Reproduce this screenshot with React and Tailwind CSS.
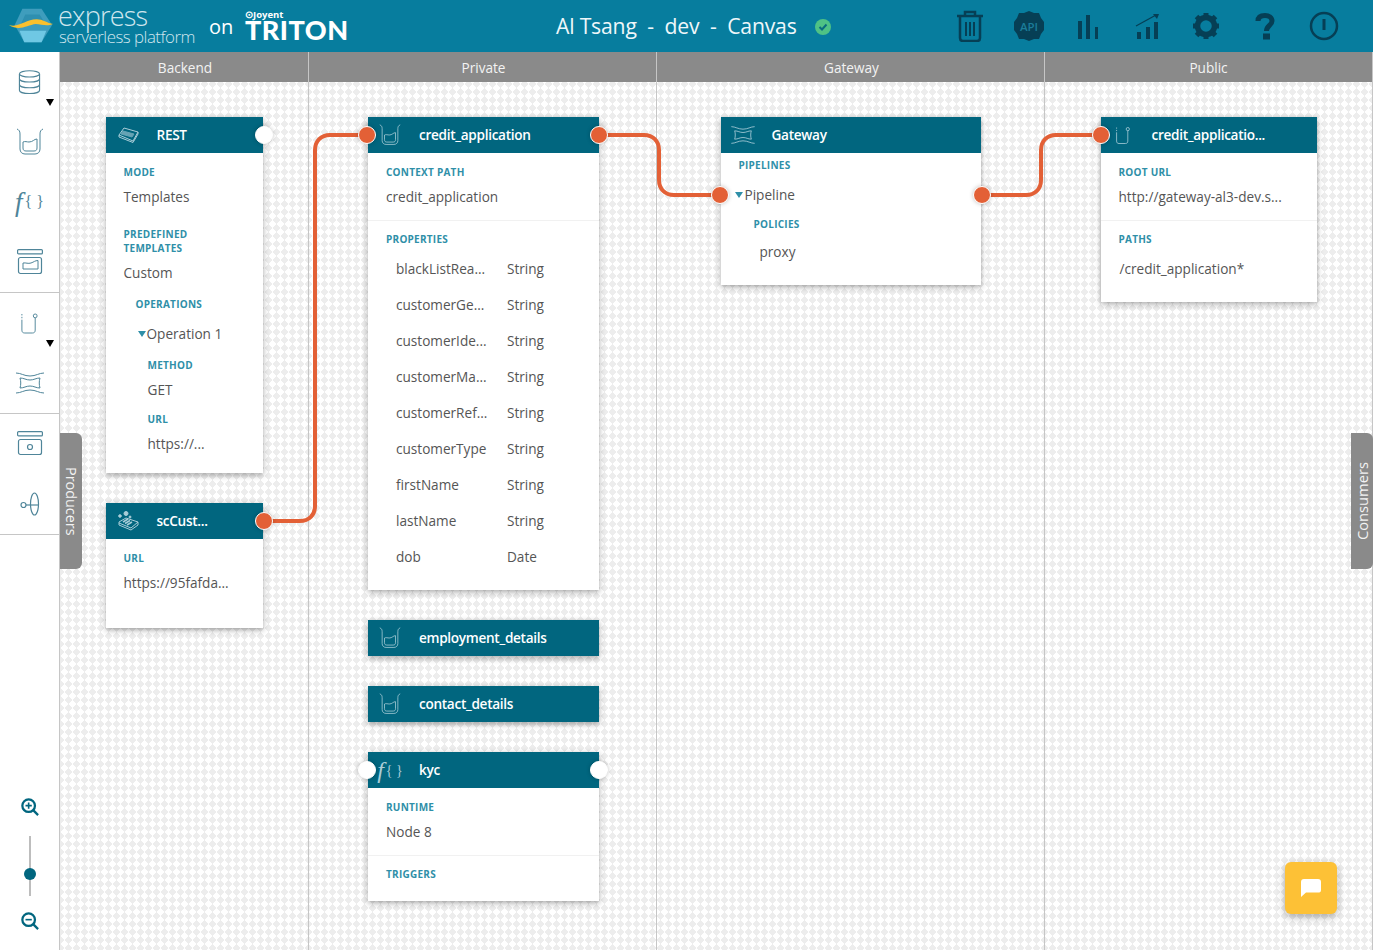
import React from "react";

const Beaker = ({ className }) => (
  <svg viewBox="0 0 28 28" className={className} fill="none" stroke="currentColor" strokeWidth="1">
    <path d="M1 1C3 2 4 3 4 6V21C4 24 6 26 9 26H19C22 26 24 24 24 21V6C24 3 25 2 27 1" />
    <path d="M7 14V20C7 22 8 23 10 23H18C20 23 21 22 21 20V11C18 11 17 14 13 14C11 14 9 13 7 14Z" />
  </svg>
);
const Gate = ({ className }) => (
  <svg viewBox="0 0 28 24" className={className} fill="none" stroke="currentColor" strokeWidth="1">
    <path d="M0 2C5 2 8 5 14 5C20 5 23 2 28 2" />
    <path d="M0 22C5 22 8 19 14 19C20 19 23 22 28 22" />
    <path d="M4 7C8 7 10 9 14 9C18 9 20 7 24 7" />
    <path d="M4 17C8 17 10 15 14 15C18 15 20 17 24 17" />
    <path d="M4 7C5 10 5 14 4 17M24 7C23 10 23 14 24 17" />
  </svg>
);
const Hook = ({ className }) => (
  <svg viewBox="0 0 20 22" className={className} fill="none" stroke="currentColor" strokeWidth="1">
    <path d="M2 1V6" strokeDasharray="1.5 1.5" />
    <path d="M2 7V18C2 20 3 21 5 21H13C15 21 16 20 16 18V5" />
    <circle cx="16" cy="3" r="2" />
  </svg>
);
const Rest = ({ className }) => (
  <svg viewBox="0 0 22 16" className={className} fill="none" stroke="currentColor" strokeWidth="1">
    <path d="M7 1L21 5L16 14L2 8Z" />
    <path d="M2 8L2 10L16 15.5L21 7V5" />
    <path d="M6 4L17 7L15 10L4 7Z" fill="currentColor" opacity=".6" />
  </svg>
);
const Swagger = ({ className }) => (
  <svg viewBox="0 0 22 20" className={className} fill="none" stroke="currentColor" strokeWidth="1">
    <path d="M2 11L9 7L21 11L14 17L2 12Z" />
    <path d="M2 12V14L14 19L21 14V11" />
    <path d="M6 11L11 8M8 12.500L13 9.500M10 14L15 11" strokeWidth="1.500" />
    <circle cx="9" cy="2.500" r="2" fill="currentColor" />
    <circle cx="3" cy="5" r="1.300" fill="currentColor" />
    <circle cx="13" cy="6" r="1" fill="currentColor" />
  </svg>
);
const Fn = ({ small }) => (
  <span className="font-['Liberation_Serif',serif] whitespace-pre flex items-center">
    <span className={`italic font-normal ${small ? "text-[24px]" : "text-[27px]"}`}>f</span>
    <span className={`ml-[2px] ${small ? "text-[14px]" : "text-[16px]"}`}>{"{ }"}</span>
  </span>
);
const Db = ({ className }) => (
  <svg viewBox="0 0 24 26" className={className} fill="none" stroke="currentColor" strokeWidth="1.200">
    <ellipse cx="12" cy="4" rx="10.500" ry="3.300" />
    <path d="M1.500 4V9C1.500 11 6 12.500 12 12.500C18 12.500 22.500 11 22.500 9V4" />
    <path d="M1.500 9V15C1.500 17 6 18.500 12 18.500C18 18.500 22.500 17 22.500 15V9" />
    <path d="M1.500 15V21C1.500 23 6 24.500 12 24.500C18 24.500 22.500 23 22.500 21V15" />
  </svg>
);
const BoxChart = ({ className }) => (
  <svg viewBox="0 0 26 26" className={className} fill="none" stroke="currentColor" strokeWidth="1.200">
    <rect x=".6" y=".6" width="24.800" height="4.300" rx="1" />
    <rect x="1.500" y="8.500" width="23" height="16" rx="2" />
    <path d="M6 20V14C9 13.500 11 15 14 14C17 13 18 11.500 21 11.500V20Z" strokeWidth="1" />
  </svg>
);
const BoxDot = ({ className }) => (
  <svg viewBox="0 0 26 26" className={className} fill="none" stroke="currentColor" strokeWidth="1.200">
    <rect x=".6" y=".6" width="24.800" height="4.300" rx="1" />
    <rect x="1.500" y="8.500" width="23" height="15" rx="2" />
    <circle cx="13" cy="16" r="2.500" />
  </svg>
);
const Side = ({ className }) => (
  <svg viewBox="0 0 20 24" className={className} fill="none" stroke="currentColor" strokeWidth="1.200">
    <circle cx="3.500" cy="13" r="2.500" />
    <path d="M6 13H19" />
    <ellipse cx="14.500" cy="12" rx="4" ry="11" />
  </svg>
);
const Tri = () => <span className="w-0 h-0 border-x-[4px] border-x-transparent border-t-[6px] border-t-[#2f8fa8] inline-block" />;

const Label = ({ children, className = "" }) => (
  <div className={`text-[10px] leading-[14px] font-bold uppercase tracking-[0.25px] text-[#2f8fa8] ${className}`}>{children}</div>
);
const Value = ({ children, className = "" }) => (
  <div className={`text-[13.600px] leading-[20px] text-[#555555] whitespace-nowrap ${className}`}>{children}</div>
);
const Port = ({ pos, on }) => (
  <span
    className={`absolute top-[9px] w-[18px] h-[18px] rounded-full shadow-[0_0_4px_rgba(0,0,0,0.25)] border border-white ${pos} ${
      on ? "bg-[#e36036]" : "bg-white"
    }`}
  />
);
const Port2 = ({ pos }) => (
  <span
    className={`absolute top-[69px] w-[18px] h-[18px] rounded-full bg-[#e36036] border border-white shadow-[0_0_4px_rgba(0,0,0,0.25)] ${pos}`}
  />
);

const Card = ({ w, icon, name, ports, children, className = "" }) => (
  <div className={`relative z-10 bg-white shadow-[0_2px_6px_rgba(0,0,0,0.35)] ${w} ${className}`}>
    <div className="relative flex items-center h-[36px] bg-[#01667f] text-white">
      <div className="w-[51px] h-full flex items-center justify-center text-[#a9cdd8] shrink-0 pr-[7px]">{icon}</div>
      <div className="text-[13.600px] leading-[20px] font-semibold tracking-[-0.3px] whitespace-nowrap">{name}</div>
      {ports}
    </div>
    {children}
  </div>
);

const props = [
  ["blackListRea...", "String"],
  ["customerGe...", "String"],
  ["customerIde...", "String"],
  ["customerMa...", "String"],
  ["customerRef...", "String"],
  ["customerType", "String"],
  ["firstName", "String"],
  ["lastName", "String"],
  ["dob", "Date"],
];

const Column = ({ title, className, bodyClass = "", headClass = "", children }) => (
  <div className={`h-full flex flex-col border-r border-[#c6c6c6] last:border-r-0 ${className}`}>
    <div className={`h-[30px] shrink-0 bg-[#8a8a8a] text-[#f3f3f3] text-[13.600px] leading-[32px] text-center ${headClass}`}>{title}</div>
    <div className={`flex flex-col items-center gap-[30px] pt-[35px] ${bodyClass}`}>{children}</div>
  </div>
);

const hdrIcon = "text-[#063f55]";
const SideCell = ({ children, tri }) => (
  <div className="relative h-[60px] flex items-center justify-center text-[#4f8599]">
    {children}
    {tri && <span className="absolute left-[46px] top-[47px] z-10 w-0 h-0 border-x-[4px] border-x-transparent border-t-[7px] border-t-black" />}
  </div>
);

export default function App() {
  return (
    <div className="relative w-full h-[950px] overflow-hidden flex flex-col font-['Open_Sans',sans-serif] bg-white">
      {/* Header */}
      <header className="relative h-[52px] shrink-0 bg-[#077d9e] flex items-center text-white">
        <svg viewBox="0 0 48 38" className="ml-[8px] w-[46px] h-[38px] shrink-0">
          <path d="M15 1H35L46 18L35 36H17L7 18Z" fill="#3f9dbd" />
          <path d="M12 24H40L35 36H17Z" fill="#6fc8e4" />
          <path d="M18 7H33L38 15C30 14 22 18 12 20Z" fill="#2e8fb0" />
          <path d="M1 18C12 21 18 12 30 12C36 12 41 16 47 17C40 20 35 17 29 17C20 18 12 25 1 18Z" fill="#fbc02d" />
        </svg>
        <div className="ml-[5px] w-[150px] shrink-0 font-light text-[#cfe6ee] mt-[-2px]">
          <div className="text-[27px] leading-[22px] tracking-[-0.8px] ml-[-1px]">express</div>
          <div className="text-[16.900px] leading-[18px] tracking-[-0.5px] mt-[1px] whitespace-nowrap">serverless platform</div>
        </div>
        <div className="text-[20px] w-[36px] shrink-0 mt-[1px]">on</div>
        <div className="w-[110px] shrink-0 mt-[-1px]">
          <div className="text-[9.500px] leading-[9px] font-bold">⊙Joyent</div>
          <div className="text-[27px] leading-[22px] font-black font-['Lato',sans-serif] tracking-[0.5px]">TRITON</div>
        </div>
        <div className="ml-[201px] text-[21.200px] whitespace-pre tracking-[-0.2px] text-[#eef7fa] w-[259px] shrink-0">{"Al Tsang  -  dev  -  Canvas"}</div>
        <svg viewBox="0 0 16 16" className="w-[16px] h-[16px] mt-[2px] shrink-0">
          <circle cx="8" cy="8" r="8" fill="#4fc285" />
          <path d="M4.500 8L7 10.500L11.500 5.500" fill="none" stroke="#0b6d7f" strokeWidth="2" />
        </svg>
        <div className="ml-[124px] flex items-center gap-[29px]">
          <svg viewBox="0 0 30 32" className={`w-[30px] h-[32px] ${hdrIcon}`} fill="none" stroke="currentColor" strokeWidth="2.500">
            <path d="M2 6H28M10 6V2H20V6M5 6V28C5 30 6 31 8 31H22C24 31 25 30 25 28V6" />
            <path d="M11 12V26M15 12V26M19 12V26" strokeWidth="2" />
          </svg>
          <svg viewBox="0 0 30 32" className={`w-[30px] h-[32px] ${hdrIcon}`}>
            <path d="M15 1L20 3L25 3L27 8L30 12V20L27 24L25 29L20 29L15 31L10 29L5 29L3 24L0 20V12L3 8L5 3L10 3Z" fill="currentColor" />
            <text x="15" y="20.500" textAnchor="middle" fontSize="11.500" fontWeight="600" fontFamily="Open Sans, sans-serif" fill="#1b7c99">API</text>
          </svg>
          <svg viewBox="0 0 30 30" className={`w-[30px] h-[30px] ${hdrIcon}`} fill="currentColor">
            <rect x="5" y="10" width="4" height="18" /><rect x="13" y="4" width="4" height="24" /><rect x="22" y="16" width="3" height="12" />
          </svg>
          <svg viewBox="0 0 30 30" className={`w-[30px] h-[30px] ${hdrIcon}`} fill="currentColor">
            <rect x="5" y="21" width="4" height="7" /><rect x="14" y="16" width="4" height="12" /><rect x="22" y="11" width="4" height="17" />
            <path d="M4 15L24 4" stroke="currentColor" strokeWidth="1.200" /><path d="M21 3H27L25 8Z" />
          </svg>
          <svg viewBox="0 0 30 30" className={`w-[30px] h-[30px] ${hdrIcon}`}>
            <circle cx="15" cy="15" r="8.500" fill="none" stroke="currentColor" strokeWidth="5.500" />
            <g stroke="currentColor" strokeWidth="5">
              <path d="M15 2V6M15 24V28M2 15H6M24 15H28M5.500 5.500L8.500 8.500M21.500 21.500L24.500 24.500M24.500 5.500L21.500 8.500M8.500 21.500L5.500 24.500" />
            </g>
          </svg>
          <svg viewBox="0 0 30 30" className={`w-[30px] h-[30px] ${hdrIcon}`}>
            <path d="M8 10C8 6 11 4.500 15 4.500C19 4.500 22 6.500 22 10C22 14.500 16.500 14.500 16.500 20" fill="none" stroke="currentColor" strokeWidth="5" />
            <rect x="13" y="22.500" width="7" height="6" fill="currentColor" />
          </svg>
          <svg viewBox="0 0 30 30" className={`w-[30px] h-[30px] ${hdrIcon}`} fill="none" stroke="currentColor" strokeWidth="2.500">
            <circle cx="15" cy="15" r="13" /><path d="M15 8V19" strokeWidth="3" />
          </svg>
        </div>
      </header>

      <div className="flex flex-1 min-h-0">
        {/* Sidebar */}
        <aside className="w-[60px] shrink-0 bg-white border-r border-[#c6c6c6] flex flex-col">
          <div className="border-b border-[#c6c6c6]">
            <SideCell tri><Db className="w-[23px] h-[25px]" /></SideCell>
            <SideCell><Beaker className="w-[28px] h-[28px]" /></SideCell>
            <SideCell><Fn /></SideCell>
            <SideCell><BoxChart className="w-[26px] h-[26px]" /></SideCell>
          </div>
          <div className="border-b border-[#c6c6c6]">
            <SideCell tri><Hook className="w-[19px] h-[21px]" /></SideCell>
            <SideCell><Gate className="w-[28px] h-[24px]" /></SideCell>
          </div>
          <div className="border-b border-[#c6c6c6]">
            <SideCell><BoxDot className="w-[26px] h-[26px]" /></SideCell>
            <SideCell><Side className="w-[20px] h-[24px]" /></SideCell>
          </div>
          <div className="mt-auto pb-[20px] flex flex-col items-center text-[#01667f]">
            <svg viewBox="0 0 20 20" className="w-[18px] h-[18px]" fill="none" stroke="currentColor" strokeWidth="2.500">
              <circle cx="8.500" cy="8.500" r="7" /><path d="M13.500 13.500L19 19" /><path d="M5 8.500H12M8.500 5V12" strokeWidth="1.800" />
            </svg>
            <div className="relative w-[2px] h-[60px] bg-[#bdbdbd] mt-[20px]">
              <span className="absolute left-[-5px] top-[32px] w-[12px] h-[12px] rounded-full bg-[#01667f]" />
            </div>
            <svg viewBox="0 0 20 20" className="w-[18px] h-[18px] mt-[16px]" fill="none" stroke="currentColor" strokeWidth="2.500">
              <circle cx="8.500" cy="8.500" r="7" /><path d="M13.500 13.500L19 19" /><path d="M5 8.500H12" strokeWidth="1.800" />
            </svg>
          </div>
        </aside>

        {/* Canvas */}
        <main className="relative flex-1 flex min-w-0 bg-white bg-[linear-gradient(45deg,#ededed_25%,transparent_25%),linear-gradient(-45deg,#ededed_25%,transparent_25%),linear-gradient(135deg,#ededed_25%,transparent_25%),linear-gradient(-135deg,#ededed_25%,transparent_25%)] bg-[length:8px_8px]">
          <svg className="absolute left-0 top-0 w-full h-full z-[5] pointer-events-none" fill="none" stroke="#e36036" strokeWidth="4">
            <path d="M204 469H240C249 469 255 463 255 454V98C255 89 261 83 270 83H308" />
            <path d="M539 83H584C593 83 599 89 599 98V128C599 137 605 143 614 143H661" />
            <path d="M922 143H966C975 143 981 137 981 128V98C981 89 987 83 996 83H1041" />
          </svg>

          <Column title="Backend" className="w-[249px] shrink-0" headClass="pl-[2px]">
            <Card w="w-[157px]" icon={<Rest className="w-[22px] h-[16px]" />} name="REST" ports={<Port pos="right-[-10px]" />}>
              <div className="pl-[18px] pt-[12px] pb-[19px]">
                <Label>Mode</Label>
                <Value className="mt-[8px]">Templates</Value>
                <Label className="mt-[20px]">Predefined<br />Templates</Label>
                <Value className="mt-[8px]">Custom</Value>
                <Label className="mt-[14px] ml-[12px]">Operations</Label>
                <Value className="mt-[13px] ml-[14px] flex items-center"><Tri /><span className="ml-[1px]">Operation 1</span></Value>
                <Label className="mt-[14px] ml-[24px]">Method</Label>
                <Value className="mt-[8px] ml-[24px]">GET</Value>
                <Label className="mt-[12px] ml-[24px]">URL</Label>
                <Value className="mt-[8px] ml-[24px]">https://...</Value>
              </div>
            </Card>
            <Card w="w-[157px]" icon={<Swagger className="w-[22px] h-[20px]" />} name="scCust..." ports={<Port pos="right-[-10px]" on />}>
              <div className="pl-[18px] pt-[12px] pb-[35px]">
                <Label>URL</Label>
                <Value className="mt-[8px]">https://95fafda...</Value>
              </div>
            </Card>
          </Column>

          <Column title="Private" className="w-[348px] shrink-0" bodyClass="pl-[2px]" headClass="pl-[2px]">
            <Card w="w-[231px]" icon={<Beaker className="w-[22px] h-[22px]" />} name="credit_application" ports={<><Port pos="left-[-10px]" on /><Port pos="right-[-9px]" on /></>}>
              <div className="pt-[12px] pb-[13px] pl-[18px] border-b border-[#f1f1f1]">
                <Label>Context Path</Label>
                <Value className="mt-[8px]">credit_application</Value>
              </div>
              <div className="pt-[11px] pb-[15px] pl-[18px]">
                <Label>Properties</Label>
                <div className="mt-[5px]">
                  {props.map(([n, t]) => (
                    <div key={n} className="h-[36px] flex items-center pl-[10px]">
                      <Value className="w-[111px]">{n}</Value>
                      <Value>{t}</Value>
                    </div>
                  ))}
                </div>
              </div>
            </Card>
            <Card w="w-[231px]" icon={<Beaker className="w-[22px] h-[22px]" />} name="employment_details" />
            <Card w="w-[231px]" icon={<Beaker className="w-[22px] h-[22px]" />} name="contact_details" />
            <Card w="w-[231px]" icon={<Fn small />} name="kyc" ports={<><Port pos="left-[-10px]" /><Port pos="right-[-9px]" /></>}>
              <div className="pt-[12px] pb-[13px] pl-[18px] border-b border-[#f1f1f1]">
                <Label>Runtime</Label>
                <Value className="mt-[8px]">Node 8</Value>
              </div>
              <div className="pt-[11px] pb-[20px] pl-[18px]">
                <Label>Triggers</Label>
              </div>
            </Card>
          </Column>

          <Column title="Gateway" className="w-[388px] shrink-0" headClass="pl-[2px]">
            <Card w="w-[260px]" icon={<Gate className="w-[24px] h-[20px]" />} name="Gateway">
              <Port2 pos="left-[-10px]" />
              <Port2 pos="right-[-10px]" />
              <div className="pl-[18px] pt-[5px] pb-[23px]">
                <Label>Pipelines</Label>
                <Value className="mt-[13px] ml-[-4px] flex items-center"><Tri /><span className="ml-[2px]">Pipeline</span></Value>
                <Label className="mt-[12px] ml-[15px]">Policies</Label>
                <Value className="mt-[11px] ml-[21px]">proxy</Value>
              </div>
            </Card>
          </Column>

          <Column title="Public" className="flex-1 min-w-0">
            <Card w="w-[216px]" icon={<Hook className="w-[16px] h-[19px]" />} name="credit_applicatio..." ports={<Port pos="left-[-9px]" on />}>
              <div className="pt-[12px] pb-[13px] pl-[18px] border-b border-[#f1f1f1]">
                <Label>Root URL</Label>
                <Value className="mt-[8px]">http://gateway-al3-dev.s...</Value>
              </div>
              <div className="pt-[11px] pb-[23px] pl-[18px]">
                <Label>Paths</Label>
                <Value className="mt-[13px] ml-[1px]">/credit_application*</Value>
              </div>
            </Card>
          </Column>

          {/* side tabs */}
          <div className="absolute left-0 top-[381px] z-10 w-[22px] h-[136px] bg-[#8a8a8a] rounded-r-[6px] flex items-center justify-center text-[#f3f3f3] text-[14.400px] [writing-mode:vertical-rl]">
            Producers
          </div>
          <div className="absolute right-0 top-[381px] z-10 w-[22px] h-[136px] bg-[#8a8a8a] rounded-l-[6px] flex items-center justify-center text-[#f3f3f3] text-[14.700px] [writing-mode:vertical-rl] rotate-180">
            Consumers
          </div>

          {/* chat button */}
          <div className="absolute right-[36px] bottom-[36px] z-20 w-[52px] h-[52px] rounded-[6px] bg-[#fdc136] shadow-[0_3px_8px_rgba(0,0,0,0.3)] flex items-center justify-center">
            <svg viewBox="0 0 20 18" className="w-[20px] h-[18px]">
              <path d="M3 0H17C19 0 20 1 20 3V11C20 13 19 13.500 17 13.500H5L0 18V3C0 1 1 0 3 0Z" fill="#ffffff" />
            </svg>
          </div>
        </main>
      </div>
    </div>
  );
}
